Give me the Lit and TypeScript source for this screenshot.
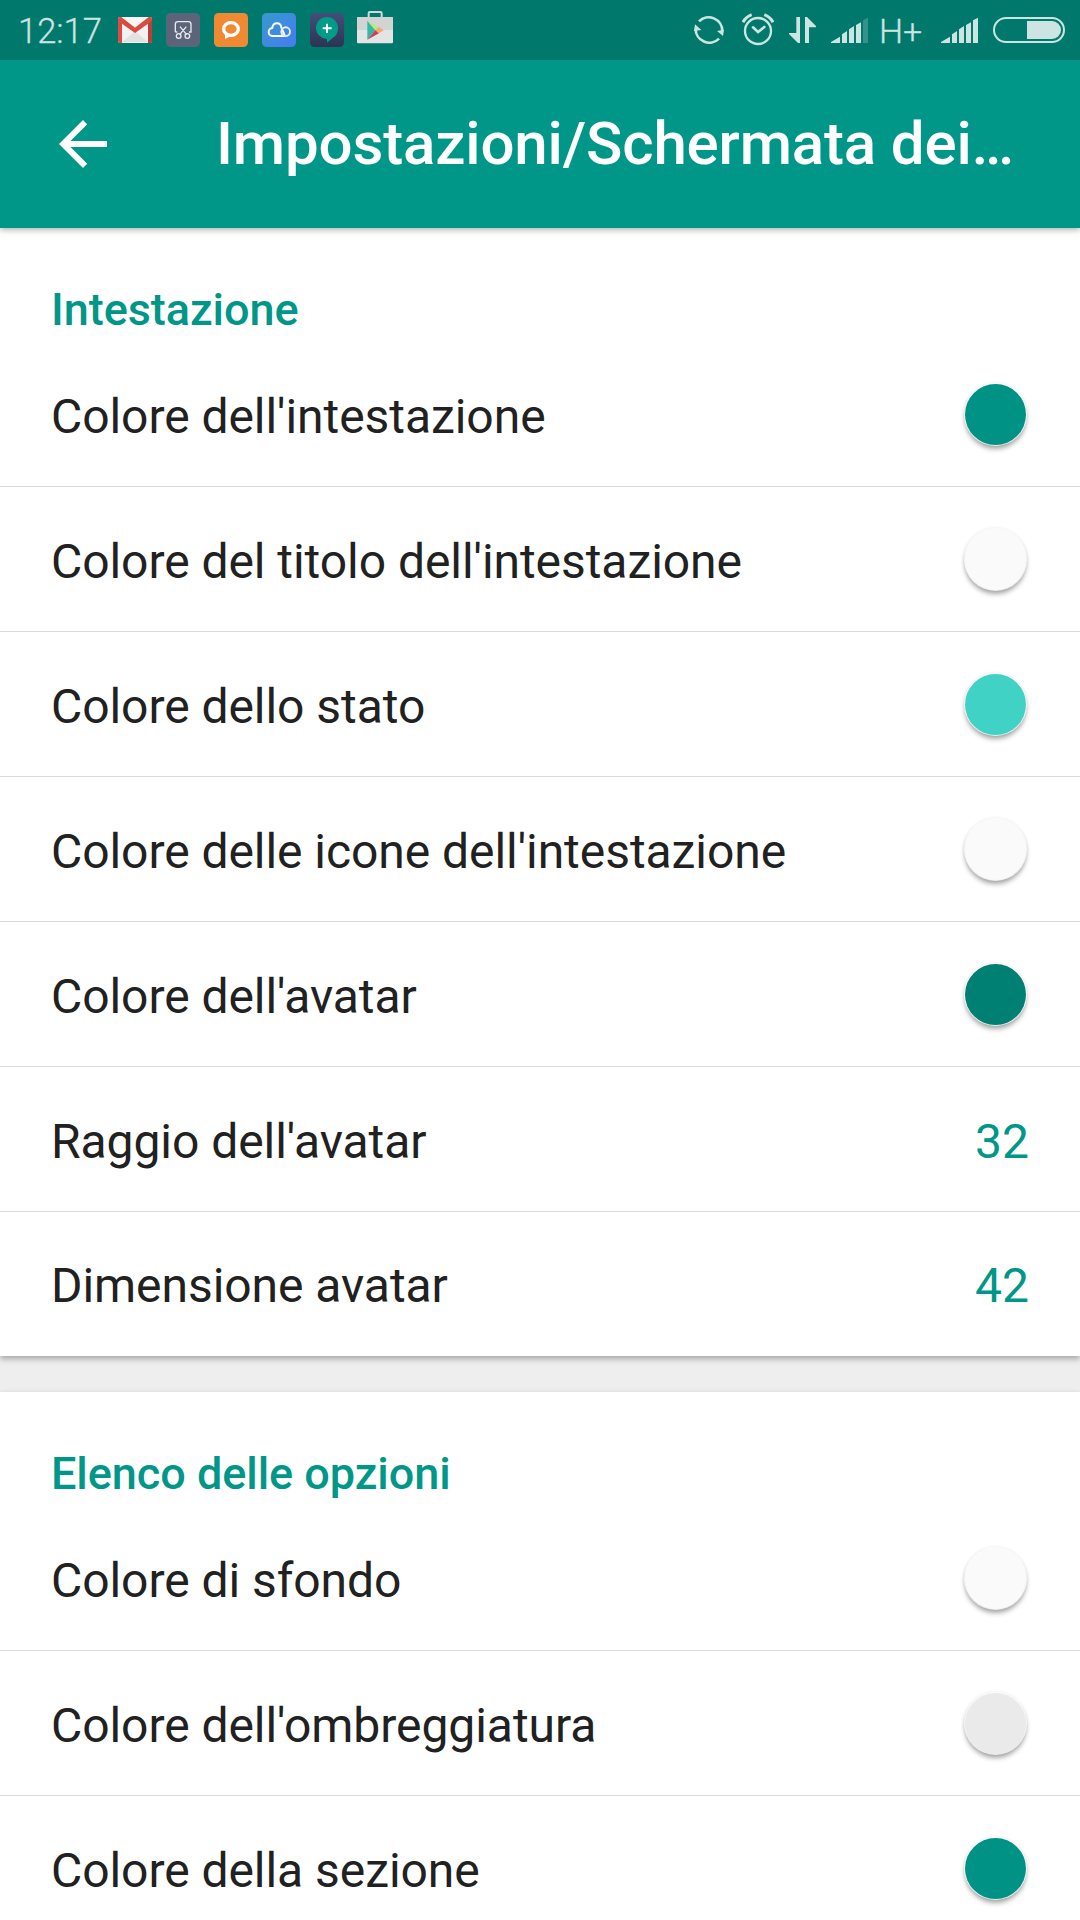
import { LitElement, html, css, svg, nothing } from "lit";
import { customElement, property } from "lit/decorators.js";
import { classMap } from "lit/directives/class-map.js";
import { styleMap } from "lit/directives/style-map.js";

interface Setting {
  label: string;
  color?: string;
  value?: number;
}

interface Section {
  title: string;
  // The list runs on below the fold, so its final visible row is a regular one.
  continues?: boolean;
  items: Setting[];
}

const SECTIONS: Section[] = [
  {
    title: "Intestazione",
    items: [
      { label: "Colore dell'intestazione", color: "#009385" },
      { label: "Colore del titolo dell'intestazione", color: "#fafafa" },
      { label: "Colore dello stato", color: "#40d3c5" },
      { label: "Colore delle icone dell'intestazione", color: "#fafafa" },
      { label: "Colore dell'avatar", color: "#007f73" },
      { label: "Raggio dell'avatar", value: 32 },
      { label: "Dimensione avatar", value: 42 },
    ],
  },
  {
    title: "Elenco delle opzioni",
    continues: true,
    items: [
      { label: "Colore di sfondo", color: "#fafafa" },
      { label: "Colore dell'ombreggiatura", color: "#eaeaea" },
      { label: "Colore della sezione", color: "#009385" },
    ],
  },
];

// Status icons are drawn on a grid of three units per pixel, full bar height.
const icon = (x: number, w: number, body: unknown) =>
  html`<svg width=${w / 3} height="60" viewBox="${x} 0 ${w} 180" aria-hidden="true">${body}</svg>`;

@customElement("status-bar")
export class StatusBar extends LitElement {
  static styles = css`
    :host {
      display: flex;
      justify-content: space-between;
      height: 60px;
      padding: 0 15px 0 18px;
      background: #00786c;
      color: #cce4e2;
      font: 400 34px/60px Roboto, sans-serif;
    }
    .group {
      display: flex;
    }
    svg {
      display: block;
      flex: none;
    }
    .notices {
      gap: 14px;
    }
    .clock {
      width: 86px;
      font-weight: 300;
      line-height: 62px;
      font-size: 34.5px;
      white-space: nowrap;
      -webkit-text-stroke: 0.3px #cce4e2;
    }
    .store {
      margin-left: -1px;
    }
    .state {
      gap: 15px;
    }
    .sync {
      margin-right: 3px;
    }
    .net {
      width: 45px;
      margin-left: -4px;
      margin-right: 2px;
      font-weight: 300;
      line-height: 62px;
      white-space: nowrap;
      -webkit-text-stroke: 0.3px #cce4e2;
    }
  `;

  render() {
    return html`
      <div class="group notices">
        <span class="clock">12:17</span>
        ${icon(354, 102, svg`
          <path d="M354 57q0-6 6-6h90q6 0 6 6v66q0 6-6 6h-90q-6 0-6-6z" fill="#f2f2f2"/>
          <path d="M366 127L405 93l39 34z" fill="#e2e2e2"/>
          <path d="M366 70L405 98 444 70V51H366z" fill="#e6e6e6"/>
          <path d="M354 57q0-6 6-6h4l41 32 41-32h4q6 0 6 6v66q0 6-6 6h-6V71L405 99 366 71v58h-6q-6 0-6-6z" fill="#db4b3f"/>
          <path d="M444 71l12-9v61q0 6-6 6h-6z" fill="#c23d35"/>
          <path d="M365 51h80l-40 30z" fill="#f6f6f6"/>`)}
        ${icon(498, 102, svg`
          <rect x="498" y="39" width="102" height="102" rx="14" fill="#5b6478"/>
          <g fill="none" stroke="#e8eaf0" stroke-width="4">
            <path d="M526 96V73q0-8 8-8h31q8 0 8 8v23h-6M526 96h6M540 80l20 24M559 80l-20 24"/>
            <circle cx="536" cy="108" r="7"/><circle cx="562" cy="108" r="7"/>
          </g>`)}
        ${icon(642, 102, svg`
          <rect x="642" y="39" width="102" height="102" rx="14" fill="#ef8a32"/>
          <ellipse cx="693" cy="87" rx="22" ry="19" fill="none" stroke="#fff" stroke-width="10"/>
          <path d="M675 97v20l18-9z" fill="#fff"/>`)}
        ${icon(126, 102, svg`
          <defs><linearGradient id="c" x1="0" y1="0" x2="1" y2="1"><stop stop-color="#359bcb"/><stop offset="1" stop-color="#477bf2"/></linearGradient></defs>
          <rect x="126" y="39" width="102" height="102" rx="14" fill="url(#c)"/>
          <g fill="none" stroke="#fff" stroke-width="6" stroke-linejoin="round">
            <path d="M194 108h-35a12 12 0 0 1-2-24q1-14 14-14 11 0 13 12l10 24"/>
            <circle cx="197" cy="95" r="13" stroke="#e4edff"/>
          </g>`)}
        ${icon(270, 102, svg`
          <defs><linearGradient id="n" x1="0" y1="0" x2="0" y2="1"><stop stop-color="#454e79"/><stop offset="1" stop-color="#2b3454"/></linearGradient></defs>
          <rect x="270" y="39" width="102" height="102" rx="14" fill="url(#n)"/>
          <path d="M321 51a33 33 0 0 1 33 33q0 22-16 30l-17 14v-11q-33-5-33-33a33 33 0 0 1 33-33z" fill="#009c87"/>
          <path d="M321 71v28M308 85h27" stroke="#fff" stroke-width="6"/>`)}
        <span class="store">${icon(411, 108, svg`
          <path d="M446 54V40q0-4 4-4h31q4 0 4 4v14" fill="none" stroke="#d7d7d7" stroke-width="6"/>
          <rect x="411" y="51" width="108" height="79" rx="3" fill="#e4e4e4"/>
          <path d="M411 90V54q0-3 3-3h102q3 0 3 3v36z" fill="#d3d3d3"/>
          <path d="M442 62v57l24-29z" fill="#31bba5"/>
          <path d="M442 62l35 19-11 10z" fill="#b8e986"/>
          <path d="M442 119l35-19-11-10z" fill="#d23b5f"/>
          <path d="M466 90l11-9 14 9.500-14 9.500z" fill="#f7a86b"/>`)}</span>
      </div>
      <div class="group state">
        <span class="sync">${icon(102, 90, svg`
          <g fill="none" stroke="#cce4e2" stroke-width="8">
            <path d="M117 64A41 41 0 0 1 187 93M177 116A41 41 0 0 1 107 86"/>
          </g>
          <path d="M105 73L124 90 102 93zM189 108L171 93 192 89z" fill="#cce4e2"/>`)}</span>
        ${icon(246, 96, svg`
          <g fill="none" stroke="#cce4e2" stroke-width="7">
            <circle cx="294" cy="93" r="39"/>
            <path d="M279 82l15 14 19-15" stroke-width="8" stroke-linecap="round"/>
            <path d="M249 67q8-16 26-23M339 67q-8-16-26-23" stroke-width="9"/>
          </g>`)}
        ${icon(387, 81, svg`<path d="M409 51h11v78h-6L387 102v-3h22zM435 129V51h6l27 27v4h-21v47z" fill="#cce4e2"/>`)}
        ${icon(513, 111, svg`
          <path d="M513 129v-3l27-16v19zM546 129v-26l15-10v36zM567 129V88l15-10v51zM588 129V75l15-8v62z" fill="#cce4e2"/>
          <path d="M609 129V61l15-8v76z" fill="#33938a"/>`)}
        <span class="net">H+</span>
        ${icon(243, 111, svg`<path d="M243 129v-3l27-16v19zM276 129v-26l15-10v36zM297 129V88l15-10v51zM318 129V75l15-8v62zM339 129V61l15-8v76z" fill="#cce4e2"/>`)}
        ${icon(399, 216, svg`
          <rect x="402" y="54" width="210" height="72" rx="36" fill="none" stroke="#cce4e2" stroke-width="6"/>
          <path d="M501 63h75a27 27 0 0 1 0 54h-75z" fill="#cce4e2"/>`)}
      </div>
    `;
  }
}

@customElement("setting-row")
export class SettingRow extends LitElement {
  @property({ attribute: false }) item!: Setting;
  @property({ type: Boolean }) last = false;

  static styles = css`
    .row {
      box-sizing: border-box;
      display: flex;
      align-items: center;
      justify-content: space-between;
      height: 145px;
      padding: 0 51px;
      border-bottom: 1px solid #d9d9d9;
      font: 400 48px/56px Roboto, sans-serif;
      color: #212121;
    }
    .row.last {
      height: 144px;
      border-bottom: 0;
    }
    .label,
    .value {
      padding-top: 6px;
      white-space: nowrap;
    }
    .label {
      letter-spacing: -0.055px;
    }
    .last .label,
    .last .value {
      padding-top: 4px;
    }
    .value {
      color: #009688;
    }
    .swatch {
      box-sizing: border-box;
      width: 61px;
      height: 61px;
      margin-top: 1px;
      margin-right: 3px;
      border-radius: 50%;
      box-shadow: 0 0 0 1px rgba(255, 255, 255, 0.8), 0 4px 5px rgba(0, 0, 0, 0.34), 0 0 4px rgba(0, 0, 0, 0.12);
    }
  `;

  render() {
    const { label, color, value } = this.item;
    return html`
      <div class=${classMap({ row: true, last: this.last })}>
        <span class="label">${label}</span>
        ${color ? html`<span class="swatch" style=${styleMap({ background: color })}></span>` : nothing}
        ${value !== undefined ? html`<span class="value">${value}</span>` : nothing}
      </div>
    `;
  }
}

@customElement("app-root")
export class AppRoot extends LitElement {
  static styles = css`
    :host {
      display: flex;
      flex-direction: column;
      height: 1920px;
      overflow: hidden;
      background: #eeeeee;
      font-family: Roboto, sans-serif;
    }
    status-bar,
    .toolbar,
    .section {
      flex: none;
    }
    status-bar {
      position: relative;
      z-index: 2;
    }
    .toolbar {
      position: relative;
      z-index: 1;
      box-sizing: border-box;
      display: flex;
      align-items: center;
      gap: 97px;
      height: 168px;
      padding-left: 47px;
      background: #009688;
      box-shadow: 0 2px 6px rgba(0, 0, 0, 0.3);
    }
    .back {
      display: block;
      flex: none;
    }
    .title {
      margin: 0;
      font-size: 60px;
      font-weight: 500;
      line-height: 70px;
      letter-spacing: -0.14px;
      color: #ffffff;
      white-space: nowrap;
    }
    .sections {
      display: flex;
      flex-direction: column;
      gap: 36px;
    }
    .section {
      background: #ffffff;
      box-shadow: 0 3px 6px rgba(0, 0, 0, 0.3);
    }
    .heading {
      box-sizing: border-box;
      height: 114px;
      margin: 0;
      padding: 55px 51px 0;
      font-size: 45px;
      font-weight: 500;
      line-height: 53px;
      letter-spacing: -0.05px;
      color: #009688;
    }
  `;

  render() {
    return html`
      <status-bar></status-bar>
      <header class="toolbar">
        <svg class="back" width="72" height="72" viewBox="0 0 24 24" fill="#fff" aria-hidden="true">
          <path d="M20 11H7.830l5.590-5.590L12 4l-8 8 8 8 1.410-1.410L7.830 13H20z" />
        </svg>
        <h1 class="title">Impostazioni/Schermata dei…</h1>
      </header>
      <main class="sections">
        ${SECTIONS.map(
          (s) => html`
            <section class="section">
              <h2 class="heading">${s.title}</h2>
              ${s.items.map(
                (item, i) =>
                  html`<setting-row .item=${item} ?last=${!s.continues && i === s.items.length - 1}></setting-row>`,
              )}
            </section>
          `,
        )}
      </main>
    `;
  }
}
